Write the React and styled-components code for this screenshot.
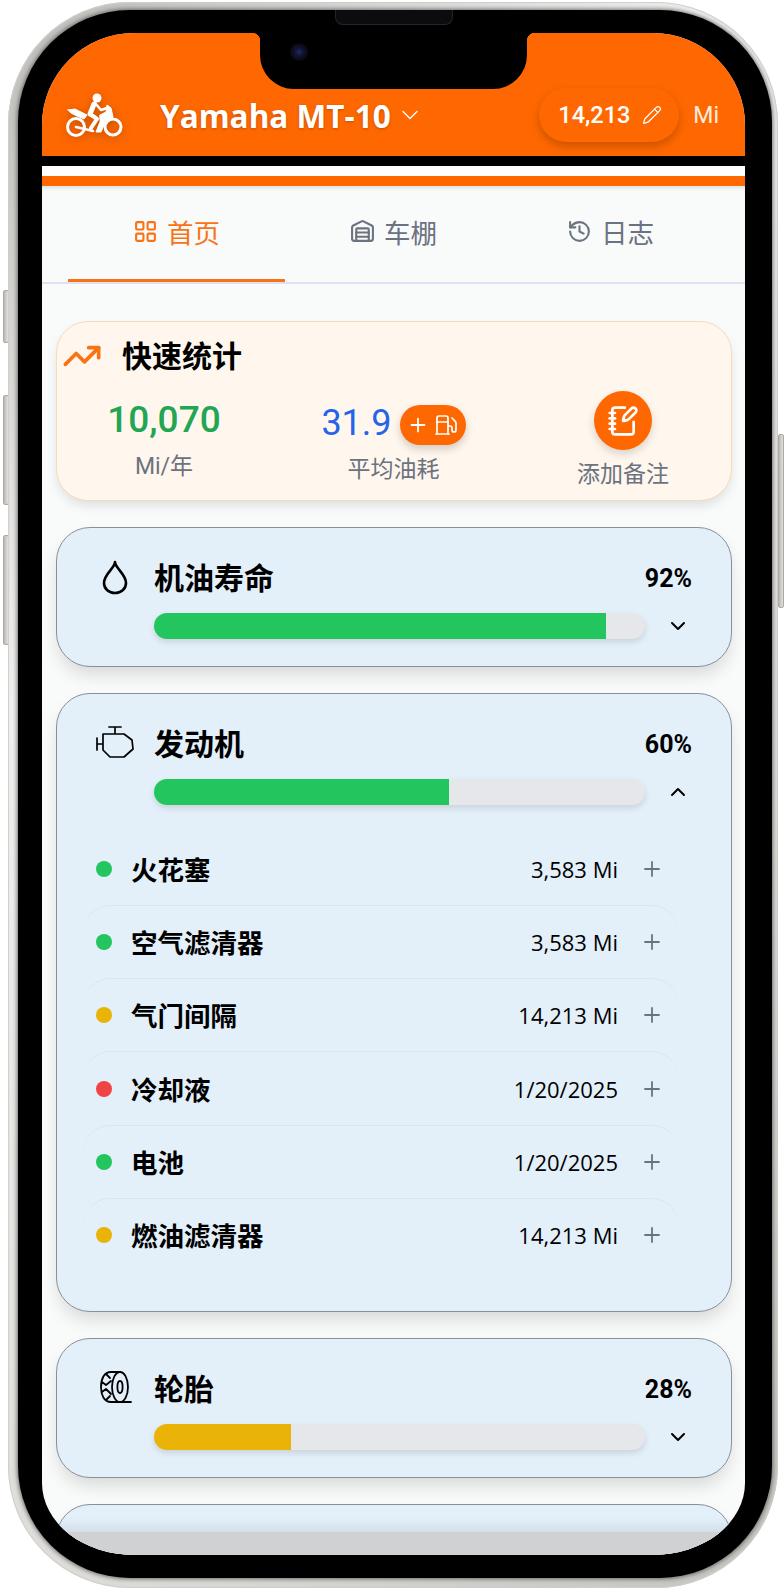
import React from 'react';
import styled, { createGlobalStyle } from 'styled-components';
import { ChevronDown, ChevronUp, Fuel, History, LayoutGrid, NotebookPen, Pencil, Plus, TrendingUp, Warehouse } from 'lucide-react';

const ORANGE = '#ff6800';

const GlobalStyle = createGlobalStyle`
  html, body {
    margin: 0;
    padding: 0;
    background: #fff;
    font-family: Roboto, "Noto Sans CJK SC", sans-serif;
  }
  * { box-sizing: border-box; }
`;

const Page = styled.div`
  position: relative;
  width: 784px;
  height: 1590px;
  padding: 2px 6px 2px 8px;
`;

const SideButton = styled.div`
  position: absolute;
  top: ${p => p.$top}px;
  height: ${p => p.$height}px;
  width: 6px;
  ${p => (p.$right ? 'right: 0;' : 'left: 3px;')}
  background: linear-gradient(90deg, #b9b8b4, #e2e1de);
  border: 1px solid #a9a8a4;
  border-radius: 2px;
`;

const Frame = styled.div`
  position: relative;
  height: 100%;
  padding: 8px 6px 10px 10px;
  border-radius: 122px;
  background: linear-gradient(135deg, #bdbcb9, #f1f0ee 30%, #dddcd9 70%, #c4c3bf);
  box-shadow: inset 0 0 1px 1px #cfcecb;
`;

const Bezel = styled.div`
  position: relative;
  height: 100%;
  padding: 23px 27px 23px 24px;
  border-radius: 112px;
  background: #000;
  box-shadow: 0 0 4px 1px rgba(60, 60, 60, .7);
`;

const Speaker = styled.div`
  position: absolute;
  top: 0;
  left: 317px;
  width: 118px;
  height: 15px;
  background: #0c0c0e;
  border: 1px solid #26262a;
  border-top: none;
  border-radius: 0 0 8px 8px;
`;

const Notch = styled.div`
  position: absolute;
  top: 23px;
  left: 242px;
  width: 267px;
  height: 56px;
  background: #000;
  border-radius: 0 0 34px 34px;
  z-index: 3;

  &::before, &::after {
    content: '';
    position: absolute;
    top: 0;
    width: 8px;
    height: 8px;
  }
  &::before {
    left: -8px;
    background: radial-gradient(circle at 0 100%, transparent 8px, #000 8.5px);
  }
  &::after {
    right: -8px;
    background: radial-gradient(circle at 100% 100%, transparent 8px, #000 8.5px);
  }
`;

const Camera = styled.div`
  position: absolute;
  top: 10px;
  left: 30px;
  width: 18px;
  height: 18px;
  border-radius: 50%;
  background: radial-gradient(circle, #1e2a6a 0, #10132c 35%, #07070d 75%);
`;

const Screen = styled.div`
  position: relative;
  height: 100%;
  overflow: hidden;
  border-radius: 92px 92px 92px 92px / 92px 92px 72px 72px;
  background: #f9fafa;
`;

const Header = styled.header`
  display: flex;
  align-items: center;
  height: 123px;
  padding: 55px 26px 14px 23px;
  background: ${ORANGE};
  color: #fff;
`;

const Logo = styled.svg`
  width: 58px;
  height: 46px;
  margin-right: 37px;
  filter: drop-shadow(0 2px 4px rgba(0, 0, 0, .25));
`;

const BikeName = styled.h1`
  margin: 0 5px 0 0;
  font-family: "Open Sans", "Noto Sans CJK SC", sans-serif;
  font-size: 31.5px;
  font-weight: 700;
  text-shadow: 0 1px 3px rgba(0, 0, 0, .25);
`;

const Odometer = styled.div`
  display: flex;
  align-items: center;
  gap: 12px;
  height: 54px;
  width: 140px;
  margin-left: auto;
  padding-left: 19px;
  border-radius: 27px;
  background: ${ORANGE};
  box-shadow: 0 4px 10px rgba(0, 0, 0, .22);
  font-size: 23.5px;
  font-weight: 500;
`;

const Unit = styled.span`
  margin-left: 14px;
  font-size: 23px;
  color: #ffeede;
`;

const Stripe = styled.div`
  height: 10px;
  background: ${p => p.$color};
`;

const Tabs = styled.nav`
  display: flex;
  height: 98px;
  padding: 0 26px;
  background: #f9fafa;
  border-bottom: 2px solid #e0e0f4;
  box-shadow: inset 0 4px 5px -3px rgba(0, 0, 0, .15);
`;

const Tab = styled.div`
  flex: 1;
  display: flex;
  align-items: center;
  justify-content: center;
  gap: 9px;
  padding-bottom: 2px;
  font-size: 26.5px;
  color: ${p => (p.$active ? '#f97316' : '#6b7280')};
  border-bottom: 3px solid ${p => (p.$active ? '#f97316' : 'transparent')};
`;

const Content = styled.main`
  display: flex;
  flex-direction: column;
  gap: 26px;
  padding: 37px 13px 0 14px;
`;

const StatsCard = styled.section`
  height: 180px;
  padding: 16px 0 0 5px;
  border: 1px solid #f6dcbd;
  border-radius: 32px;
  background: #fff7ed;
  box-shadow: 0 6px 12px -2px rgba(0, 0, 0, .12);
`;

const StatsTitle = styled.div`
  display: flex;
  align-items: center;
  gap: 20px;
  height: 32px;
  font-size: 30px;
  font-weight: 700;
  color: #000;
`;

const TrendIcon = styled(TrendingUp)`
  margin-top: 4px;
`;

const StatsGrid = styled.div`
  display: grid;
  grid-template-columns: 230px 229px 230px;
  margin: 21px 0 0 -13px;
  align-items: start;
`;

const StatCol = styled.div`
  display: flex;
  flex-direction: column;
  align-items: center;
  padding-top: ${p => p.$top}px;
  gap: ${p => p.$gap}px;
`;

const StatValue = styled.div`
  display: flex;
  align-items: center;
  gap: 8px;
  height: 40px;
  font-size: ${p => p.$size}px;
  font-weight: ${p => p.$weight};
  color: ${p => p.$color};
`;

const StatLabel = styled.div`
  font-size: 23px;
  line-height: 30px;
  color: #6b7280;
`;

const FuelButton = styled.div`
  display: flex;
  align-items: center;
  justify-content: center;
  gap: 5px;
  width: 66px;
  height: 40px;
  margin-top: 3px;
  border-radius: 20px;
  background: ${ORANGE};
  color: #fff;
  box-shadow: 0 4px 8px rgba(0, 0, 0, .18);
`;

const NoteButton = styled.div`
  display: flex;
  align-items: center;
  justify-content: center;
  width: 58px;
  height: 59px;
  border-radius: 50%;
  background: ${ORANGE};
  color: #fff;
  box-shadow: 0 4px 8px rgba(0, 0, 0, .15);
`;

const HealthCard = styled.section`
  flex: none;
  min-height: 140px;
  padding: 29px 39px ${p => (p.$open ? 39.5 : 27)}px;
  border: 1px solid #8a9097;
  border-radius: 34px;
  background: #e3eff9;
  box-shadow: 0 10px 18px -3px rgba(0, 0, 0, .14);
`;

const CardHead = styled.div`
  display: grid;
  grid-template-columns: 58px 1fr auto;
  grid-template-rows: 40px;
  align-items: center;
  height: 40px;
`;

const CardIcon = styled.svg`
  width: 42px;
  height: 40px;
  justify-self: start;
  fill: none;
  stroke: #000;
  stroke-linecap: round;
  stroke-linejoin: round;
`;

const CardTitle = styled.h2`
  margin: 4px 0 0;
  font-size: 30px;
  line-height: 40px;
  font-weight: 700;
  color: #000;
`;

const Percent = styled.span`
  margin-top: 4px;
  font-size: 25px;
  line-height: 40px;
  font-weight: 700;
  color: #000;
`;

const BarRow = styled.div`
  display: flex;
  align-items: center;
  justify-content: space-between;
  margin: 16px 2px 0 58px;
  color: #000;
`;

const Bar = styled.div`
  width: 491px;
  height: 26px;
  border-radius: 13px;
  overflow: hidden;
  background: #e5e7eb;
  box-shadow: 0 3px 6px rgba(0, 0, 0, .12);
`;

const BarFill = styled.div`
  height: 100%;
  background: ${p => p.$color};
`;

const Items = styled.ul`
  list-style: none;
  margin: 26.5px 0 0 -12px;
  padding: 0;
  width: 594px;
`;

const Item = styled.li`
  display: flex;
  align-items: center;
  height: 73.3px;
  padding: 0 14px 0 12px;
  border-top: 1px solid ${p => (p.$first ? 'transparent' : '#dbe5ef')};
  border-radius: 26px 26px 0 0;
`;

const Dot = styled.span`
  width: 16px;
  height: 16px;
  margin-right: 19px;
  border-radius: 50%;
  background: ${p => p.$color};
`;

const ItemName = styled.span`
  flex: 1;
  margin-bottom: 1px;
  font-size: 26.5px;
  font-weight: 700;
  color: #000;
`;

const ItemValue = styled.span`
  margin-right: 22px;
  font-family: "Open Sans", "Noto Sans CJK SC", sans-serif;
  font-size: 22px;
  font-weight: 500;
  color: #000;
`;

const PlusIcon = styled(Plus)`
  color: #6b7280;
`;

const BottomFade = styled.div`
  position: absolute;
  left: 0;
  right: 0;
  bottom: 0;
  height: 23px;
  background: #cfd1d3;
  box-shadow: 0 -6px 10px rgba(190, 200, 215, .45);
`;

const GREEN = '#22c55e';
const YELLOW = '#eab308';
const RED = '#ef4444';

const engineItems = [
    {name: '火花塞', value: '3,583 Mi', color: GREEN},
    {name: '空气滤清器', value: '3,583 Mi', color: GREEN},
    {name: '气门间隔', value: '14,213 Mi', color: YELLOW},
    {name: '冷却液', value: '1/20/2025', color: RED},
    {name: '电池', value: '1/20/2025', color: GREEN},
    {name: '燃油滤清器', value: '14,213 Mi', color: YELLOW},
];

const BikeLogo = () => (
    <Logo viewBox="0 0 58 46" fill="none" stroke="#fff" strokeLinecap="round" strokeLinejoin="round">
        <circle cx="11" cy="35" r="8.5" strokeWidth="3" />
        <circle cx="48" cy="35" r="8" strokeWidth="3" />
        <circle cx="32" cy="6" r="4.5" fill="#fff" stroke="none" />
        <path d="M3 18 L10 17 L22 23 L19 27 L12 24 C8 22 5 21 3 18 Z" fill="#fff" strokeWidth="1" />
        <path d="M29 12 L25 22" strokeWidth="5" />
        <path d="M25 22 L32 27 L26 36" strokeWidth="4" />
        <path d="M30 11 L36 18 L42 16" strokeWidth="2.5" />
        <path d="M35 23 L41 20 L42 13 L46 16 L48 25 L40 31 L36 40 L31 40 L35 30 Z" fill="#fff" strokeWidth="1" />
        <path d="M11 35 L28 39" strokeWidth="2.6" />
    </Logo>
);

const DropIcon = () => (
    <CardIcon viewBox="0 0 42 40" strokeWidth="2.6">
        <path d="M19 5 C19 11 8 17 8 26 C8 32 13 36 19 36 C25 36 30 32 30 26 C30 17 19 11 19 5 Z" />
    </CardIcon>
);

const EngineIcon = () => (
    <CardIcon viewBox="0 0 42 34" strokeWidth="1.7">
        <path d="M1 12 V24 M1 18 H7 M13 1 H25 M19 1 V8 M7 8 H28 L36 14 L37 23 L28 31 H14 L7 24 Z" />
    </CardIcon>
);

const TireIcon = () => (
    <CardIcon viewBox="0 0 42 40" strokeWidth="1.8">
        <ellipse cx="24" cy="19" rx="8" ry="15" />
        <ellipse cx="24" cy="19" rx="2.6" ry="6" />
        <path d="M24 4 H15 C8 4 5 11 5 19 C5 27 8 34 15 34 H35 M6 14 L10 17 L15 13 M6 24 L10 21 L15 26 M10 6 L14 10 M10 32 L14 28" />
    </CardIcon>
);

const HealthSection = ({icon, title, percent, color, open, children}) => (
    <HealthCard $open={open}>
        <CardHead>
            {icon}
            <CardTitle>{title}</CardTitle>
            <Percent>{percent}%</Percent>
        </CardHead>
        <BarRow>
            <Bar>
                <BarFill $color={color} style={{width: `${percent}%`}} />
            </Bar>
            {open ? <ChevronUp size={24} /> : <ChevronDown size={24} />}
        </BarRow>
        {children}
    </HealthCard>
);

export default function App() {
    return (
        <Page>
            <GlobalStyle />
            <SideButton $top={290} $height={53} />
            <SideButton $top={395} $height={110} />
            <SideButton $top={535} $height={110} />
            <SideButton $right $top={434} $height={174} />
            <Frame>
                <Bezel>
                    <Speaker />
                    <Notch>
                        <Camera />
                    </Notch>
                    <Screen>
                        <Header>
                            <BikeLogo />
                            <BikeName>Yamaha MT-10</BikeName>
                            <ChevronDown size={28} strokeWidth={1.2} />
                            <Odometer>
                                14,213
                                <Pencil size={20} strokeWidth={1.5} />
                            </Odometer>
                            <Unit>Mi</Unit>
                        </Header>
                        <Stripe $color="#000" />
                        <Stripe $color="#fff" />
                        <Stripe $color={ORANGE} />
                        <Tabs>
                            <Tab $active><LayoutGrid size={25} strokeWidth={2} />首页</Tab>
                            <Tab><Warehouse size={25} strokeWidth={2} />车棚</Tab>
                            <Tab><History size={25} strokeWidth={2} />日志</Tab>
                        </Tabs>
                        <Content>
                            <StatsCard>
                                <StatsTitle>
                                    <TrendIcon size={40} color="#f97316" strokeWidth={2.2} />
                                    快速统计
                                </StatsTitle>
                                <StatsGrid>
                                    <StatCol $top={8} $gap={13}>
                                        <StatValue $size={37} $weight={500} $color="#22a653">10,070</StatValue>
                                        <StatLabel>Mi/年</StatLabel>
                                    </StatCol>
                                    <StatCol $top={12} $gap={12}>
                                        <StatValue $size={36} $weight={400} $color="#2563eb">
                                            31.9
                                            <FuelButton><Plus size={22} strokeWidth={2} /><Fuel size={24} strokeWidth={1.7} /></FuelButton>
                                        </StatValue>
                                        <StatLabel>平均油耗</StatLabel>
                                    </StatCol>
                                    <StatCol $top={0} $gap={10}>
                                        <NoteButton><NotebookPen size={32} strokeWidth={2} /></NoteButton>
                                        <StatLabel>添加备注</StatLabel>
                                    </StatCol>
                                </StatsGrid>
                            </StatsCard>
                            <HealthSection icon={<DropIcon />} title="机油寿命" percent={92} color={GREEN} />
                            <HealthSection icon={<EngineIcon />} title="发动机" percent={60} color={GREEN} open>
                                <Items>
                                    {engineItems.map((item, i) => (
                                        <Item key={item.name} $first={i === 0}>
                                            <Dot $color={item.color} />
                                            <ItemName>{item.name}</ItemName>
                                            <ItemValue>{item.value}</ItemValue>
                                            <PlusIcon size={24} strokeWidth={1.8} />
                                        </Item>
                                    ))}
                                </Items>
                            </HealthSection>
                            <HealthSection icon={<TireIcon />} title="轮胎" percent={28} color={YELLOW} />
                            <HealthCard />
                        </Content>
                        <BottomFade />
                    </Screen>
                </Bezel>
            </Frame>
        </Page>
    );
}
